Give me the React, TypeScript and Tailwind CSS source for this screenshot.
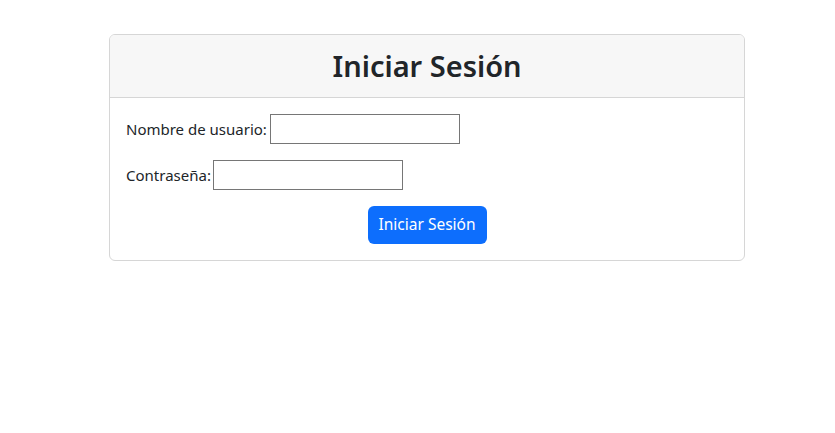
export default function App() {
  return (
    <div className="min-h-screen bg-white text-[#212529]" style={{ fontFamily: '"Noto Sans", sans-serif' }}>
      <div className="pt-[34px] pl-[109px]">
        <div className="w-[636px] border border-[#d6d6d6] rounded-[6px] overflow-hidden">
          <div className="h-[63px] bg-[#f7f7f7] border-b border-[#d6d6d6] flex items-center justify-center">
            <h2 className="text-[29px] font-semibold leading-none pb-[2px]">Iniciar Sesión</h2>
          </div>
          <form className="p-4 flex flex-col gap-4 text-[15px]" onSubmit={(e) => e.preventDefault()}>
            <div className="flex items-center h-[30px]">
              <label className="mr-[3px]">Nombre de usuario:</label>
              <input type="text" className="w-[190px] h-[30px] border border-[#767676] bg-white" />
            </div>
            <div className="flex items-center h-[30px]">
              <label className="mr-[2px]">Contraseña:</label>
              <input type="password" className="w-[190px] h-[30px] border border-[#767676] bg-white" />
            </div>
            <div className="flex justify-center">
              <button type="submit" className="w-[119px] h-[38px] bg-[#0d6efd] text-white text-[15.5px] rounded-[6px]">Iniciar Sesión</button>
            </div>
          </form>
        </div>
      </div>
    </div>
  );
}
